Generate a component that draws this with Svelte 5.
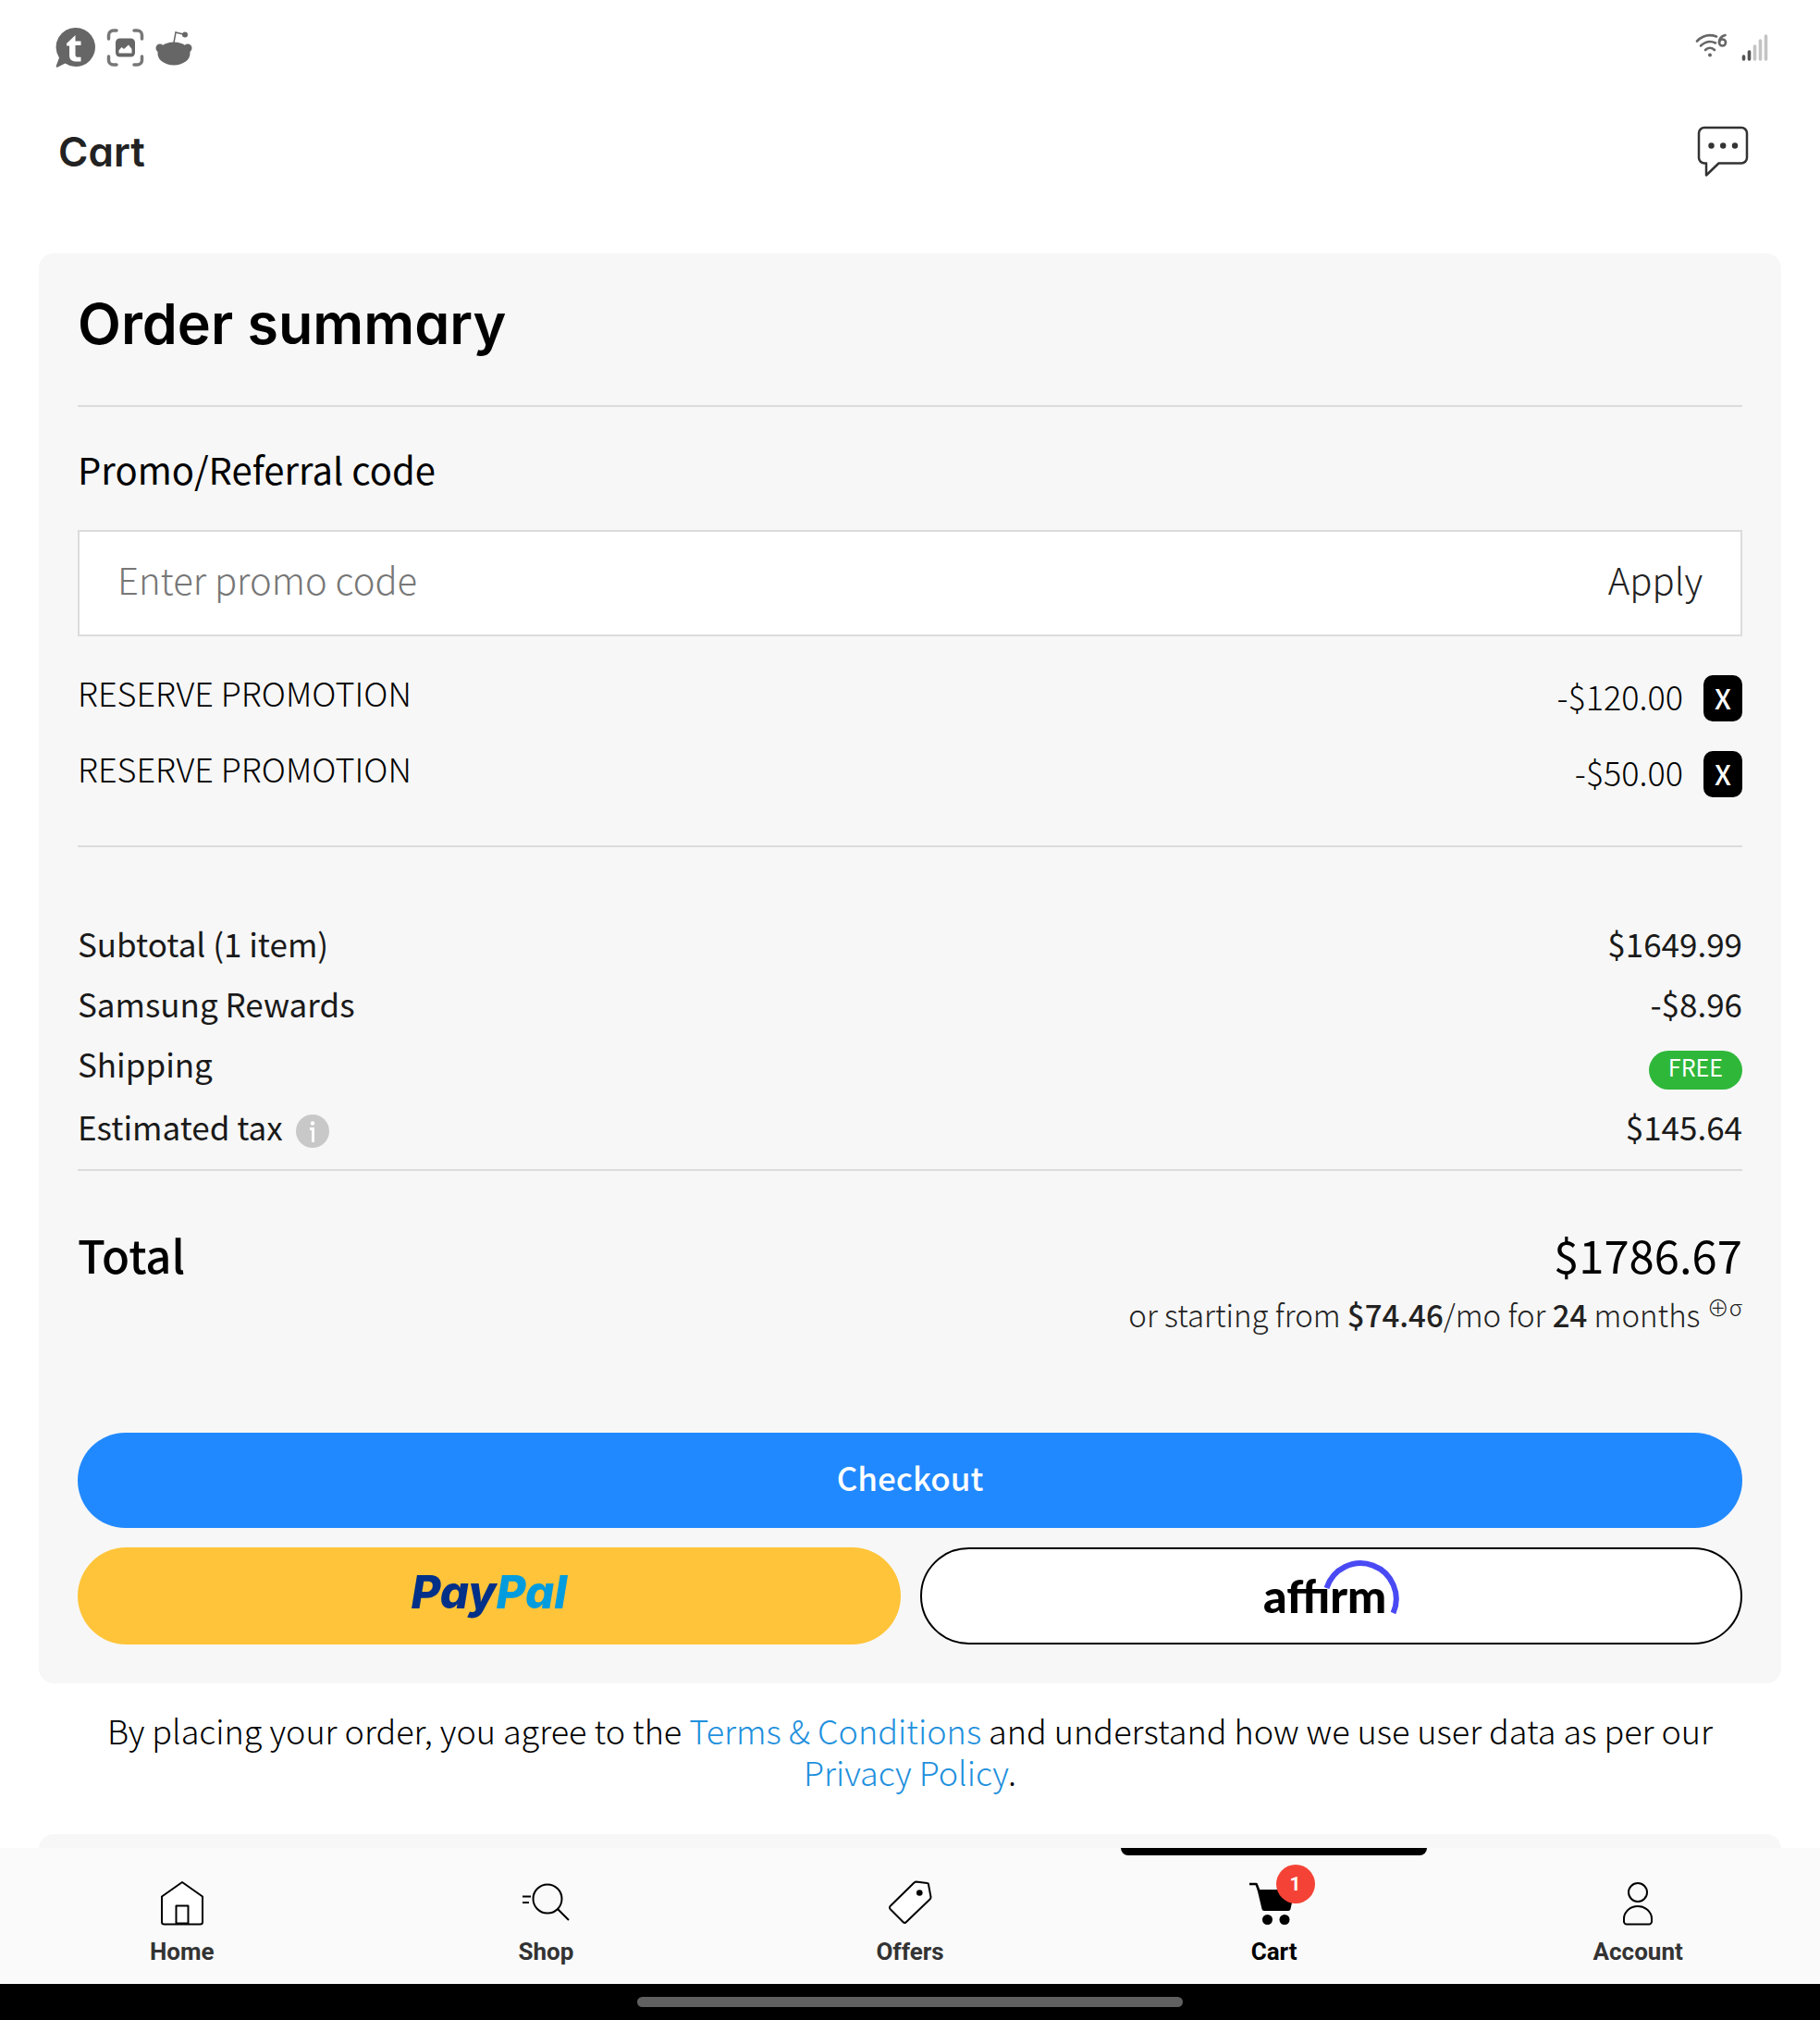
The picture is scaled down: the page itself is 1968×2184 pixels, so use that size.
<script lang="ts">
interface Promotion {
  id: number;
  name: string;
  amount: string;
}

interface NavItem {
  id: string;
  label: string;
}

let promoCode = $state('');
let current = $state('cart');

let promotions: Promotion[] = $state([
  { id: 1, name: 'RESERVE PROMOTION', amount: '-$120.00' },
  { id: 2, name: 'RESERVE PROMOTION', amount: '-$50.00' },
]);

const navItems: NavItem[] = [
  { id: 'home', label: 'Home' },
  { id: 'shop', label: 'Shop' },
  { id: 'offers', label: 'Offers' },
  { id: 'cart', label: 'Cart' },
  { id: 'account', label: 'Account' },
];

function removePromotion(id: number) {
  promotions = promotions.filter((p) => p.id !== id);
}

function navigate(e: MouseEvent, id: string) {
  e.preventDefault();
  current = id;
}
</script>

<div class="app">
  <div class="status-bar">
    <div class="status-group">
      <!-- tapatalk -->
      <svg width="43" height="43" viewBox="0 0 43 43">
        <path fill="#666" d="M22 0a21 21 0 1 1-11.500 38.600L2.500 42.600C1 43.200.4 42.300.8 41L4 32.500A21 21 0 0 1 22 0z" />
        <path fill="#fff" d="M21.500 8v6.500h6v4.500h-6v10c0 2 1 2.800 3 2.800h3v4.700h-5c-5 0-7.500-2.300-7.500-6.800V19.500h-3V17z" />
      </svg>
      <!-- screen capture -->
      <svg width="41" height="43" viewBox="0 0 41 43">
        <path fill="none" stroke="#777" stroke-width="3.500" stroke-linecap="round" d="M2.500 12V8a5 5 0 0 1 5-5H11M30 3h3.500a5 5 0 0 1 5 5v4M2.500 31v4a5 5 0 0 0 5 5H11M30 40h3.500a5 5 0 0 0 5-5v-4" />
        <rect x="10" y="11.500" width="21" height="20" rx="4.500" fill="#666" />
        <path fill="#fff" d="M13.500 27.500v-3l3-3.500 2.500 2 5-4.500 3.500 4.500v4.500z" />
      </svg>
      <!-- reddit -->
      <svg width="40" height="43" viewBox="0 0 40 43">
        <circle cx="5" cy="22" r="4.500" fill="#666" />
        <circle cx="35" cy="22" r="4.500" fill="#666" />
        <ellipse cx="20" cy="28" rx="17.500" ry="12.500" fill="#666" />
        <path fill="none" stroke="#666" stroke-width="1.500" d="M20 16l2-11 10 2.500" />
        <circle cx="32" cy="7.500" r="3" fill="#666" />
      </svg>
    </div>
    <div class="status-group right">
      <!-- wifi 6 -->
      <svg width="36" height="30" viewBox="0 0 36 30">
        <g fill="none" stroke="#666" stroke-width="2.600" stroke-linecap="round">
          <path d="M2 8.500C8 2.500 16 1 23 3.500" />
          <path d="M6 13.500c5-4.500 11-5.500 16-3" />
          <path d="M11 18c3-3 7-3 10 0" />
          <path d="M32.500 2c-4 1-6.500 4-6.500 8" />
          <circle cx="29.500" cy="10" r="3.500" />
        </g>
        <circle cx="16" cy="23.500" r="2" fill="#666" />
      </svg>
      <!-- signal -->
      <svg width="29" height="30" viewBox="0 0 29 30">
        <g stroke-width="3.600" stroke-linecap="round">
          <path stroke="#555" d="M2.500 25v3M8.500 20v8" />
          <path stroke="#c4c4c4" d="M14.500 14v14M20.500 8v20M26.500 3v25" />
        </g>
      </svg>
    </div>
  </div>

  <header class="header">
    <h1 class="page-title">Cart</h1>
    <button class="chat-btn" type="button" aria-label="Chat">
      <svg width="57" height="56" viewBox="0 0 57 56">
        <path fill="none" stroke="#333" stroke-width="2.500" stroke-linejoin="round" d="M10 40.500H8a6 6 0 0 1-6-6V8a6 6 0 0 1 6-6h40a6 6 0 0 1 6 6v26.500a6 6 0 0 1-6 6H23.500L10 53.500z" />
        <circle cx="15.500" cy="21.500" r="3.200" fill="#333" />
        <circle cx="28.200" cy="21.500" r="3.200" fill="#333" />
        <circle cx="41" cy="21.500" r="3.200" fill="#333" />
      </svg>
    </button>
  </header>

  <main class="content">
    <section class="card">
      <h2 class="card-title">Order summary</h2>
      <hr />

      <form class="promo" onsubmit={(e) => e.preventDefault()}>
        <label class="promo-label" for="promo-code">Promo/Referral code</label>
        <div class="promo-box">
          <input id="promo-code" class="promo-input" type="text" placeholder="Enter promo code" bind:value={promoCode} />
          <button class="apply-btn" type="submit">Apply</button>
        </div>
      </form>

      <ul class="promotions">
        {#each promotions as promo (promo.id)}
          <li class="promotion">
            <span class="promotion-name">{promo.name}</span>
            <span class="promotion-amount">{promo.amount}</span>
            <button class="remove-btn" type="button" aria-label="Remove promotion" onclick={() => removePromotion(promo.id)}>X</button>
          </li>
        {/each}
      </ul>
      <hr />

      <dl class="totals">
        <div class="row">
          <dt>Subtotal (1 item)</dt>
          <dd>$1649.99</dd>
        </div>
        <div class="row">
          <dt>Samsung Rewards</dt>
          <dd>-$8.96</dd>
        </div>
        <div class="row">
          <dt>Shipping</dt>
          <dd class="free">FREE</dd>
        </div>
        <div class="row tax">
          <dt>Estimated tax</dt>
          <button class="info-btn" type="button" aria-label="About estimated tax">
            <svg width="36" height="36" viewBox="0 0 36 36">
              <circle cx="18" cy="18" r="18" fill="#c8c8c8" />
              <circle cx="18" cy="9.500" r="2.200" fill="#fff" />
              <path fill="none" stroke="#fff" stroke-width="3" d="M15 15.500h3.500V30" />
            </svg>
          </button>
          <dd>$145.64</dd>
        </div>
      </dl>
      <hr />

      <div class="total">
        <span class="total-label">Total</span>
        <span class="total-value">$1786.67</span>
      </div>
      <p class="installments">or starting from <b>$74.46</b>/mo for <b>24</b> months <sup>⊕σ</sup></p>

      <div class="actions">
        <button class="btn checkout" type="button">Checkout</button>
        <button class="btn paypal" type="button"><span class="pay">Pay</span><span class="pal">Pal</span></button>
        <button class="btn affirm" type="button" aria-label="affirm">
          <svg width="149" height="80" viewBox="0 0 149 80">
            <text class="affirm-text" x="1" y="58">affırm</text>
            <path fill="none" stroke="#4a4af4" stroke-width="6" d="M69.500 31A38.500 38.500 0 1 1 141.500 58" />
          </svg>
        </button>
      </div>
    </section>

    <p class="terms">
      By placing your order, you agree to the <a href="#terms">Terms &amp; Conditions</a> and understand how we use user data as per our
      <a href="#privacy">Privacy Policy</a>.
    </p>

    <section class="card next-card"></section>
  </main>

  <nav class="nav">
    {#each navItems as item}
      <a class="nav-item" class:active={current === item.id} href="#{item.id}" onclick={(e) => navigate(e, item.id)}>
        <span class="nav-icon">
          <svg width="56" height="50" viewBox="0 0 56 50" fill="none" stroke="#000" stroke-width="2" stroke-linejoin="round">
            {#if item.id === 'home'}
              <path fill="#fff" d="M6 18.500L28 3l22 15.500V46a2.500 2.500 0 0 1-2.500 2.500h-39A2.500 2.500 0 0 1 6 46z" />
              <path d="M21.500 47.500V28.500h13v19z" />
            {:else if item.id === 'shop'}
              <circle cx="30" cy="21" r="15.500" />
              <path d="M41 32l12 12M3 18.500h9M3 25h7" />
            {:else if item.id === 'offers'}
              <path fill="#fff" d="M34.500 2.500L46.500 4a1.500 1.500 0 0 1 1.500 1.500L50.500 19a3 3 0 0 1-1 2.500L24 46a2.500 2.500 0 0 1-3.500 0L7 32.500a2.500 2.500 0 0 1 0-4L32.500 3.500a3 3 0 0 1 2-1z" />
              <circle cx="38.300" cy="14.500" r="3.300" fill="#000" stroke="none" />
            {:else if item.id === 'cart'}
              <path stroke-width="2.600" d="M1 5h7.500L12 14" />
              <path fill="#000" stroke="none" d="M9.500 11H50l-4.500 21a2.500 2.500 0 0 1-2.500 2H17a2.500 2.500 0 0 1-2.500-2z" />
              <circle cx="20.500" cy="43.500" r="5.500" fill="#000" stroke="none" />
              <circle cx="39" cy="43.500" r="5.500" fill="#000" stroke="none" />
            {:else}
              <circle cx="28" cy="14" r="10" />
              <path d="M13 45.500v-3a15 13.500 0 0 1 30 0v3a3 3 0 0 1-3 3H16a3 3 0 0 1-3-3z" />
            {/if}
          </svg>
          {#if item.id === 'cart'}
            <span class="badge">1</span>
          {/if}
        </span>
        <span class="nav-label">{item.label}</span>
      </a>
    {/each}
  </nav>

  <div class="system-bar"><span class="handle"></span></div>
</div>

<style>
  :global(body) {
    background: #fff;
  }

  .app {
    display: flex;
    flex-direction: column;
    height: 100vh;
    overflow: hidden;
    font-family: 'Noto Sans CJK JP', 'Noto Sans', sans-serif;
    font-size: 36px;
    color: #1a1a1a;
  }

  h1, h2, p, ul, dl, dd {
    margin: 0;
    padding: 0;
  }

  button {
    padding: 0;
    border: 0;
    background: none;
    font: inherit;
    color: inherit;
    cursor: pointer;
  }

  svg {
    display: block;
  }

  hr {
    height: 2px;
    margin: 0;
    border: 0;
    background: #dcdcdc;
  }

  .status-bar {
    display: flex;
    flex: none;
    justify-content: space-between;
    align-items: center;
    height: 102px;
    padding: 0 56px 0 60px;
  }

  .status-group {
    display: flex;
    gap: 12px;
  }

  .status-group.right {
    gap: 14px;
  }

  .header {
    display: flex;
    flex: none;
    justify-content: space-between;
    align-items: center;
    height: 124px;
    padding: 0 76px 0 63px;
  }

  .page-title {
    font-family: Inter, sans-serif;
    font-feature-settings: 'cv11';
    font-size: 44px;
    font-weight: 600;
    line-height: 56px;
    color: #222;
  }

  .content {
    display: flex;
    flex: 1;
    flex-direction: column;
    min-height: 0;
    padding: 48px 42px 0;
    overflow: hidden;
  }

  .card {
    flex: none;
    padding: 36px 42px 42px;
    border-radius: 16px;
    background: #f7f7f7;
  }

  .card-title {
    margin-bottom: 48px;
    font-family: Inter, sans-serif;
    font-feature-settings: 'cv11';
    font-size: 61px;
    font-weight: 600;
    line-height: 80px;
    color: #000;
  }

  .promo-label {
    display: block;
    margin: 41px 0 40px;
    font-size: 40px;
    line-height: 52px;
    color: #000;
  }

  .promo-box {
    display: flex;
    align-items: center;
    box-sizing: border-box;
    height: 115px;
    padding: 0 41px 10px;
    border: 2px solid #dcdcdc;
    background: #fff;
  }

  .promo-input {
    flex: 1;
    min-width: 0;
    padding: 0;
    border: 0;
    outline: none;
    background: none;
    font: inherit;
    font-size: 40px;
    font-weight: 300;
    line-height: 60px;
    color: #000;
  }

  .promo-input::placeholder {
    color: #777;
  }

  .apply-btn {
    font-size: 40px;
    font-weight: 300;
    line-height: 60px;
    color: #222;
  }

  .promotions {
    display: flex;
    flex-direction: column;
    gap: 32px;
    margin: 42px 0 52px;
    list-style: none;
  }

  .promotion {
    display: flex;
    align-items: flex-start;
    height: 50px;
    font-weight: 300;
    color: #000;
  }

  .promotion-name {
    flex: 1;
    line-height: 36px;
  }

  .promotion-amount {
    margin-right: 22px;
    line-height: 44px;
  }

  .remove-btn {
    width: 42px;
    height: 50px;
    padding-bottom: 2px;
    border-radius: 10px;
    background: #000;
    color: #fff;
    font-size: 30px;
    font-weight: 500;
    line-height: 48px;
  }

  .totals {
    padding: 71px 0 10px;
    font-size: 35px;
  }

  .row {
    display: flex;
    align-items: flex-start;
    line-height: 65px;
  }

  .row dd {
    margin-left: auto;
  }

  .row .free {
    margin-top: 19px;
    padding: 0 21px 8px;
    border-radius: 21px;
    background: #2fb73a;
    color: #fff;
    font-size: 25px;
    line-height: 34px;
  }

  .row.tax {
    line-height: 72px;
  }

  .info-btn {
    margin: 23px 0 0 14px;
  }

  .total {
    display: flex;
    justify-content: space-between;
    margin: 56px 0 9px;
    font-size: 49px;
    line-height: 68px;
    color: #000;
  }

  .total-label {
    font-weight: 500;
  }

  .installments {
    font-size: 33px;
    font-weight: 300;
    line-height: 44px;
    text-align: right;
    color: #222;
  }

  .installments b {
    font-weight: 500;
  }

  .installments sup {
    font-size: 24px;
    line-height: 0;
  }

  .actions {
    display: grid;
    grid-template-columns: 1fr 1fr;
    gap: 21px;
    margin-top: 106px;
  }

  .btn {
    display: flex;
    justify-content: center;
    align-items: center;
    height: 105px;
    border-radius: 53px;
  }

  .checkout {
    grid-column: 1 / -1;
    height: 103px;
    padding-bottom: 8px;
    background: #2189ff;
    color: #fff;
    font-size: 35px;
    font-weight: 500;
  }

  .paypal {
    padding-bottom: 8px;
    background: #ffc439;
    font-family: Inter, sans-serif;
    font-feature-settings: 'cv11';
    font-size: 49px;
    font-style: italic;
    font-weight: 800;
  }

  .pay {
    color: #003087;
  }

  .pal {
    color: #009cde;
  }

  .affirm {
    border: 2px solid #000;
    box-sizing: border-box;
    background: #fff;
  }

  .affirm-text {
    font-family: Lato, sans-serif;
    font-size: 50px;
    font-weight: 900;
    fill: #000;
  }

  .terms {
    margin: 28px 0 45px;
    padding: 0 42px;
    font-weight: 300;
    line-height: 45px;
    text-align: center;
    color: #000;
  }

  .terms a {
    color: #1f90dd;
    text-decoration: none;
  }

  .next-card {
    min-height: 60px;
  }

  .nav {
    display: grid;
    flex: none;
    grid-template-columns: repeat(5, 1fr);
    height: 147px;
    background: #fafafa;
  }

  .nav-item {
    position: relative;
    display: flex;
    flex-direction: column;
    align-items: center;
    gap: 12px;
    padding-top: 34px;
    color: #333;
    text-decoration: none;
  }

  .nav-item.active {
    color: #000;
  }

  .nav-item.active::before {
    content: '';
    position: absolute;
    top: 0;
    left: 8%;
    right: 8%;
    height: 8px;
    border-radius: 0 0 8px 8px;
    background: #000;
  }

  .nav-icon {
    position: relative;
  }

  .nav-label {
    font-family: Roboto, sans-serif;
    font-size: 26px;
    font-weight: 700;
    line-height: 32px;
  }

  .badge {
    position: absolute;
    top: -16px;
    left: 30px;
    width: 42px;
    border-radius: 50%;
    background: #f44336;
    color: #fff;
    font-family: Roboto, sans-serif;
    font-size: 21px;
    font-weight: 700;
    line-height: 42px;
    text-align: center;
  }

  .system-bar {
    display: flex;
    flex: none;
    justify-content: center;
    align-items: center;
    height: 39px;
    background: #000;
  }

  .handle {
    width: 30%;
    height: 11px;
    border-radius: 6px;
    background: #606060;
  }
</style>
